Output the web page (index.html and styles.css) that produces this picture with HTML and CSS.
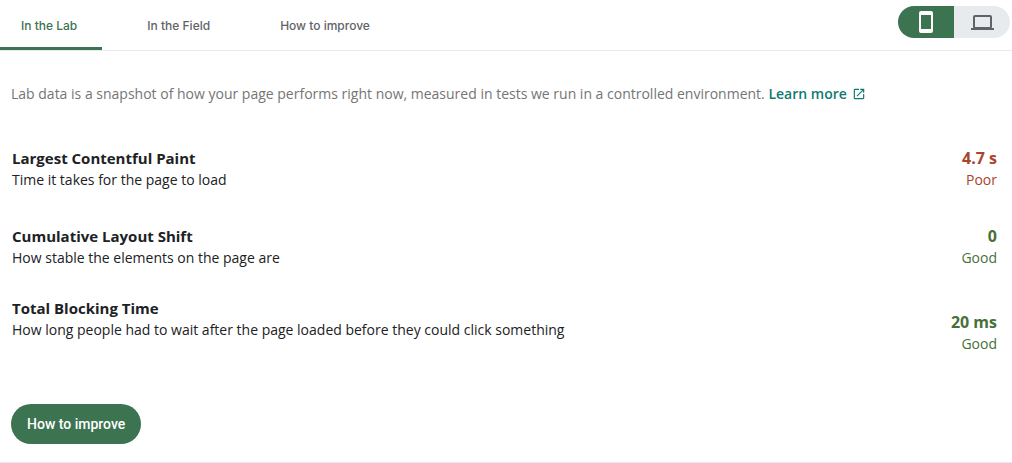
FILE: index.html
```
<!DOCTYPE html>
<html lang="en">
<head>
    <meta charset="UTF-8">
    <meta name="viewport" content="width=device-width, initial-scale=1.0">
    <title>Page Performance</title>
    <link rel="stylesheet" href="styles.css">
</head>
<body>
    <header class="topbar">
        <nav class="tabs">
            <a class="tab active" href="#lab">In the Lab</a>
            <a class="tab" href="#field">In the Field</a>
            <a class="tab" href="#improve">How to improve</a>
        </nav>
        <div class="device-toggle">
            <button type="button" class="device selected" aria-label="Mobile" aria-pressed="true">
                <svg width="24" height="24" viewBox="0 0 24 24" fill="currentColor">
                    <path fill-rule="evenodd" d="M7 1h10a2 2 0 0 1 2 2v18a2 2 0 0 1-2 2H7a2 2 0 0 1-2-2V3a2 2 0 0 1 2-2zM7 5v14h10V5z"/>
                </svg>
            </button>
            <button type="button" class="device" aria-label="Desktop" aria-pressed="false">
                <svg width="24" height="24" viewBox="0 0 24 24">
                    <rect x="4" y="6" width="17" height="12" rx="1" fill="none" stroke="currentColor" stroke-width="2"/>
                    <path d="M1 18h23v2H1z" fill="currentColor"/>
                </svg>
            </button>
        </div>
    </header>

    <main class="content" id="lab">
        <p class="intro">Lab data is a snapshot of how your page performs right now, measured in tests we run in a controlled environment.
            <a href="#learn">Learn more<svg width="14" height="14" viewBox="0 0 24 24" fill="currentColor">
                <path d="M19 19H5V5h7V3H5a2 2 0 0 0-2 2v14a2 2 0 0 0 2 2h14c1.100 0 2-.9 2-2v-7h-2zM14 3v2h3.590l-9.830 9.830 1.410 1.410L19 6.410V10h2V3z"/>
            </svg></a>
        </p>

        <section class="metrics">
            <div class="metric">
                <div class="info">
                    <h2>Largest Contentful Paint</h2>
                    <p>Time it takes for the page to load</p>
                </div>
                <div class="result poor">
                    <strong>4.7 s</strong>
                    <span>Poor</span>
                </div>
            </div>
            <div class="metric">
                <div class="info">
                    <h2>Cumulative Layout Shift</h2>
                    <p>How stable the elements on the page are</p>
                </div>
                <div class="result good">
                    <strong>0</strong>
                    <span>Good</span>
                </div>
            </div>
            <div class="metric last">
                <div class="info">
                    <h2>Total Blocking Time</h2>
                    <p>How long people had to wait after the page loaded before they could click something</p>
                </div>
                <div class="result good">
                    <strong>20 ms</strong>
                    <span>Good</span>
                </div>
            </div>
        </section>

        <button type="button" class="improve">How to improve</button>
    </main>
</body>
</html>
```
FILE: styles.css
```
body {
    margin: 0;
    font-family: "Open Sans", Arial, sans-serif;
    font-size: 14px;
    line-height: 21px;
    color: #202124;
    background-color: #fff;
}
h2, p {
    margin: 0;
}
button {
    border: 0;
    padding: 0;
    font-family: inherit;
    cursor: pointer;
}
.topbar {
    display: flex;
    justify-content: space-between;
    height: 50px;
    border-bottom: 1px solid #e8eaed;
}
.tabs {
    display: flex;
    gap: 20px;
}
.tab {
    padding: 15px 25px 0;
    border-bottom: 3px solid transparent;
    font-family: Inter, Arial, sans-serif;
    font-size: 12px;
    font-weight: 500;
    color: #5f6368;
    text-decoration: none;
}
.tab.active {
    padding-left: 21px;
    border-bottom-color: #3c7350;
    border-top-right-radius: 3px;
    color: #3c7350;
}
.device-toggle {
    display: flex;
    align-self: flex-start;
    height: 32px;
    margin: 6px 2px 0 0;
    border-radius: 16px;
    overflow: hidden;
}
.device {
    display: flex;
    align-items: center;
    justify-content: center;
    width: 56px;
    background-color: #e8ebed;
    color: #5f6368;
}
.device.selected {
    background-color: #3c7350;
    color: #fff;
}
.content {
    padding: 32px 15px 18px 11px;
    border-bottom: 1px solid #e8eaed;
}
.intro {
    color: #757575;
}
.intro a {
    font-weight: 600;
    color: #0f7b72;
    text-decoration: none;
}
.intro svg {
    margin-left: 5px;
    vertical-align: -2px;
}
.metrics {
    padding: 44px 0 36px 1px;
}
.metric {
    display: flex;
    align-items: center;
    justify-content: space-between;
    margin-bottom: 36px;
}
.metric h2 {
    font-size: 15px;
    font-weight: 700;
    line-height: 21px;
}
.metric.last {
    margin: -6px 0 0;
}
.metric.last .info {
    padding-bottom: 28px;
}
.result {
    display: flex;
    flex-direction: column;
    text-align: right;
}
.result strong {
    font-size: 16px;
}
.poor {
    color: #a8452c;
}
.good {
    color: #477038;
}
.improve {
    height: 40px;
    padding: 0 16px;
    border-radius: 20px;
    background-color: #3c7350;
    font-family: Roboto, Arial, sans-serif;
    font-size: 14px;
    font-weight: 500;
    color: #fff;
}
```
